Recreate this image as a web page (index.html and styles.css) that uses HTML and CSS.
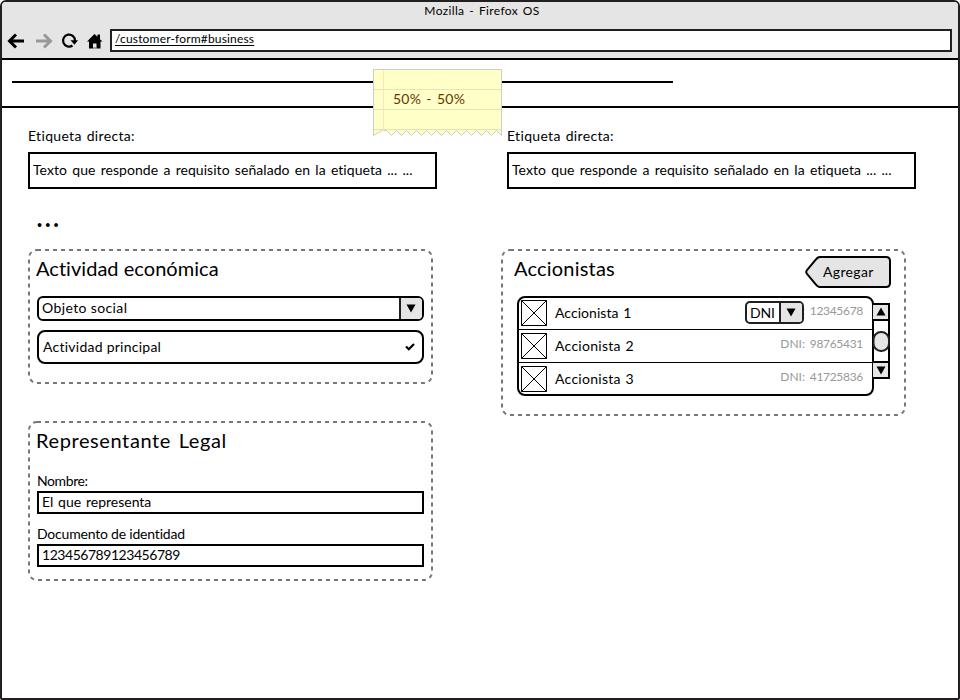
FILE: index.html
```
<!DOCTYPE html>
<html lang="es">
<head>
<meta charset="utf-8">
<title>Mozilla - Firefox OS</title>
<link rel="stylesheet" href="styles.css">
</head>
<body>
<div class="window">
  <header class="chrome">
    <div class="title">Mozilla - Firefox OS</div>
    <div class="toolbar">
      <svg class="nav" width="108" height="24" viewBox="0 0 108 24">
        <path d="M22 12H8M14 5.500L7.500 12L14 18.500" fill="none" stroke="#000" stroke-width="3"/>
        <path d="M34 12H48M42 5.500L48.500 12L42 18.500" fill="none" stroke="#999" stroke-width="3"/>
        <path d="M70.500 16.500A6 6 0 1 1 73 12" fill="none" stroke="#000" stroke-width="2.200"/>
        <path d="M68.500 11.200H76L72.500 15.800Z"/>
        <path d="M85 12.500L92.500 5L95.500 7.800V5.500H98V10.200L100.500 12.500H98.500V19.500H94.500V14.500H91V19.500H87V12.500Z"/>
        <path d="M91 18.500H94.500V19.500H91Z" fill="#555"/>
      </svg>
      <div class="address"><span>/customer-form#business</span></div>
    </div>
  </header>
  <div class="banner"><div class="rule"></div></div>

  <main>
    <div class="fields">
      <div class="field">
        <label>Etiqueta directa:</label>
        <div class="box">Texto que responde a requisito señalado en la etiqueta ... ...</div>
      </div>
      <div class="field">
        <label>Etiqueta directa:</label>
        <div class="box">Texto que responde a requisito señalado en la etiqueta ... ...</div>
      </div>
    </div>
    <div class="more">...</div>

    <div class="columns">
      <div class="left">
        <section class="panel activity">
          <svg class="outline"><rect x="1" y="1" width="403" height="133" rx="8"/></svg>
          <h2 class="h-act">Actividad económica</h2>
          <div class="combo">
            <span class="combo-text">Objeto social</span>
            <span class="combo-btn"><svg width="10" height="9"><path d="M0.500 0.500H9.500L5 8.500Z"/></svg></span>
          </div>
          <div class="option">
            <span>Actividad principal</span>
            <svg width="10" height="8"><path d="M1 3.500L3.800 6.300L9 1" fill="none" stroke="#000" stroke-width="2.200"/></svg>
          </div>
        </section>
        <section class="panel legal">
          <svg class="outline"><rect x="1" y="1" width="403" height="158" rx="8"/></svg>
          <h2 class="h-legal">Representante Legal</h2>
          <label class="l-name">Nombre:</label>
          <div class="input i-name">El que representa</div>
          <label class="l-doc">Documento de identidad</label>
          <div class="input i-doc">123456789123456789</div>
        </section>
      </div>

      <section class="panel holders">
        <svg class="outline"><rect x="1" y="1" width="403" height="165" rx="8"/></svg>
        <div class="holders-head">
          <h2 class="h-acc">Accionistas</h2>
          <div class="add">
            <svg width="86" height="32"><path d="M15 1H81Q85 1 85 5V27Q85 31 81 31H15Q12.500 31 10.500 28L2 18Q0.500 16 2 14L10.500 4Q12.500 1 15 1Z" fill="#e5e5e5" stroke="#000" stroke-width="2"/></svg>
            <span>Agregar</span>
          </div>
        </div>
        <div class="holders-body">
          <div class="list">
            <div class="row">
              <svg class="pic" width="26" height="26"><path d="M0.500 0.500H25.500V25.500H0.500ZL25.500 25.500M25.500 0.500L0.500 25.500"/></svg>
              <span class="name n1">Accionista 1</span>
              <span class="doc">DNI: <span class="num">12345678</span></span>
              <div class="mini">
                <span class="mini-text">DNI</span>
                <span class="mini-btn"><svg width="10" height="9"><path d="M0.500 0.500H9.500L5 8.500Z"/></svg></span>
              </div>
            </div>
            <div class="row">
              <svg class="pic" width="26" height="26"><path d="M0.500 0.500H25.500V25.500H0.500ZL25.500 25.500M25.500 0.500L0.500 25.500"/></svg>
              <span class="name">Accionista 2</span>
              <span class="doc">DNI: <span class="num">98765431</span></span>
            </div>
            <div class="row">
              <svg class="pic" width="26" height="26"><path d="M0.500 0.500H25.500V25.500H0.500ZL25.500 25.500M25.500 0.500L0.500 25.500"/></svg>
              <span class="name">Accionista 3</span>
              <span class="doc">DNI: <span class="num">41725836</span></span>
            </div>
          </div>
          <svg class="scroll" width="17" height="76">
            <path d="M0 1H16V17H0M0 59H16V75H0" fill="#e5e5e5" stroke="#000" stroke-width="2"/>
            <path d="M16 17V59" stroke="#000" stroke-width="2"/>
            <path d="M3.500 12.500H12.500L8 4.500ZM3.500 63.500H12.500L8 71.500Z"/>
            <rect x="0.500" y="29" width="15.500" height="19" rx="7.500" fill="#e5e5e5" stroke="#231f20" stroke-width="2"/>
          </svg>
        </div>
      </section>
    </div>
  </main>

  <aside class="note">
    <svg width="129" height="68">
      <path d="M0.500 66.500V0.500H128.500V66.500L123.500 61.500L118.500 66.500L113.500 61.500L108.500 66.500L103.500 61.500L98.500 66.500L93.500 61.500L88.500 66.500L83.500 61.500L78.500 66.500L73.500 61.500L68.500 66.500L63.500 61.500L58.500 66.500L53.500 61.500L48.500 66.500L43.500 61.500L38.500 66.500L33.500 61.500L28.500 66.500L23.500 61.500L18.500 66.500L13.500 61.500L9 61.500Z" fill="#ffffc8" stroke="#ccc"/>
      <path d="M1 20.500H128M1 40.500H128M1 60.500H128" stroke="#e4e4b4"/>
      <path d="M10.500 1V62" stroke="#ffe3b4"/>
    </svg>
    <span>50% - 50%</span>
  </aside>
</div>
</body>
</html>
```
FILE: styles.css
```
* { box-sizing: border-box; }
body {
  margin: 0;
  background: #fff;
  color: #000;
  font: 14px/20px Lato, "Liberation Sans", sans-serif;
  letter-spacing: 0.25px;
  white-space: nowrap;
}
svg { display: block; flex: none; }
label { display: block; }
h2 { margin: 0; font-size: 20px; line-height: 24px; font-weight: 400; }

.window {
  position: relative;
  width: 960px;
  height: 700px;
  border: 2px solid #231f20;
  border-radius: 6px 6px 2px 2px;
  overflow: hidden;
}
.chrome { height: 58px; background: #e5e5e5; border-bottom: 2px solid #000; }
.title { height: 27px; text-align: center; font-size: 12px; line-height: 17px; letter-spacing: 0.36px; word-spacing: 1.4px; padding-left: 4px; }
.toolbar { display: flex; align-items: flex-start; padding-right: 6px; }
.address {
  flex: 1;
  height: 23px;
  border: 2px solid #231f20;
  background: #fff;
  padding-left: 3px;
  font-size: 12px;
  line-height: 15px;
  letter-spacing: 0.17px;
}
.address span { text-decoration: underline; text-underline-offset: 2px; text-decoration-skip-ink: none; }

.banner { height: 48px; border-bottom: 2px solid #000; padding: 21px 0 0 10px; }
.rule { width: 661px; height: 2px; background: #000; }

main { padding: 18px 0 0 26px; }
.fields { display: flex; gap: 70px; }
.field { width: 409px; }
.field label { height: 26px; line-height: 20px; letter-spacing: 0.33px; word-spacing: 1px; }
.box { height: 37px; border: 2px solid #000; padding-left: 3px; line-height: 31px; letter-spacing: 0.05px; word-spacing: 1.6px; }
.more { height: 60px; padding: 6px 0 0 8px; font-size: 30px; line-height: 40px; letter-spacing: 1.2px; }

.columns { display: flex; align-items: flex-start; gap: 68px; }
.left { display: flex; flex-direction: column; gap: 37px; }
.panel { position: relative; width: 405px; }
.outline { position: absolute; left: 0; top: 0; width: 100%; height: 100%; }
.outline rect { fill: none; stroke: #777; stroke-width: 2; stroke-dasharray: 4 4; }
.activity { height: 135px; padding: 7px 9px 0 8px; }
.legal { height: 160px; padding: 7px 9px 0 8px; }
.holders { height: 167px; padding: 7px 15px 0 13px; }
.h-act { letter-spacing: 0.04px; }
.h-legal { letter-spacing: 0.6px; word-spacing: 2px; }
.h-acc { letter-spacing: 0.2px; }

.combo { display: flex; height: 25px; margin: 16px 0 0 1px; border: 2px solid #000; border-radius: 6px; overflow: hidden; }
.combo-text { flex: 1; padding-left: 3px; line-height: 20px; letter-spacing: 0.38px; }
.combo-btn { display: flex; align-items: center; justify-content: center; width: 23px; padding-right: 1px; border-left: 2px solid #231f20; background: #e5e5e5; }
.option { display: flex; align-items: center; justify-content: space-between; height: 34px; margin: 9px 0 0 1px; padding: 0 7px 0 4px; border: 2px solid #000; border-radius: 8px; }

.legal label { margin-left: 1px; height: 20px; }
.legal .l-name { margin-top: 19px; letter-spacing: -0.4px; }
.legal .l-doc { margin-top: 10px; letter-spacing: -0.2px; }
.input { height: 23px; margin-left: 1px; border: 2px solid #000; padding-left: 3px; line-height: 18px; }
.i-name { letter-spacing: 0; word-spacing: 1.2px; }
.i-doc { letter-spacing: -0.46px; }

.holders-head { display: flex; justify-content: space-between; height: 40px; }
.add { display: grid; }
.add > * { grid-area: 1 / 1; }
.add span { position: relative; padding-left: 18px; line-height: 32px; letter-spacing: 0.35px; }
.holders-body { display: flex; padding-left: 3px; }
.list { width: 357px; height: 100px; border: 2px solid #000; border-radius: 8px; }
.row { position: relative; display: flex; align-items: flex-start; height: 31px; padding: 2px 9px 0 2px; }
.row + .row { height: 33px; border-top: 1px solid #000; padding-top: 3px; }
.pic path { fill: none; stroke: #000; stroke-width: 1; }
.name { flex: 1; padding: 3px 0 0 8px; letter-spacing: 0.27px; word-spacing: 1px; }
.n1 { letter-spacing: 0.05px; }
.doc { font-size: 12px; line-height: 16px; padding-top: 3px; color: #999; letter-spacing: 0.05px; word-spacing: 1.5px; }
.num { letter-spacing: -0.3px; }
.mini { position: absolute; left: 226px; top: 3px; display: flex; width: 59px; height: 23px; border: 2px solid #231f20; border-radius: 5px; background: #fff; overflow: hidden; }
.mini-text { flex: 1; padding-left: 3px; line-height: 19px; letter-spacing: -0.2px; }
.mini-btn { display: flex; align-items: center; justify-content: center; width: 23px; padding-right: 1px; border-left: 2px solid #231f20; background: #e5e5e5; }
.scroll { margin: 7px 0 0 -1px; }

.note { position: absolute; left: 371px; top: 67px; display: grid; color: #6b3300; }
.note > * { grid-area: 1 / 1; }
.note span { position: relative; padding: 20px 0 0 20px; letter-spacing: 0.2px; word-spacing: 1.5px; }
```
